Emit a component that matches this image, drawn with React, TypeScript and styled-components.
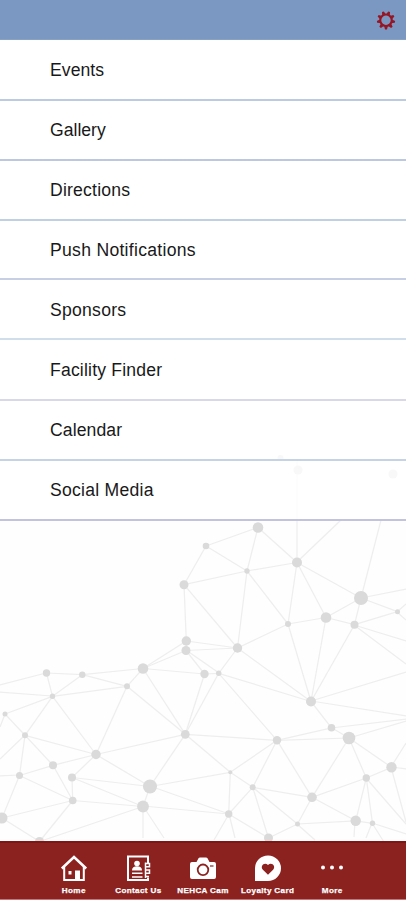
import React from 'react';
import styled, { createGlobalStyle } from 'styled-components';

const GlobalStyle = createGlobalStyle`
  *, *::before, *::after { box-sizing: border-box; }
  body { margin: 0; background: #fff; }
`;

const Screen = styled.main`
  position: relative;
  display: flex;
  flex-direction: column;
  height: 900px;
  overflow: hidden;
  background: #fefefe;
  font-family: 'Liberation Sans', Arial, sans-serif;
`;

const Backdrop = styled.svg`
  position: absolute;
  left: 0;
  top: 0;
`;

const Header = styled.header`
  position: relative;
  flex: none;
  display: flex;
  justify-content: flex-end;
  height: 40px;
  padding: 10px 9px 0 0;
  background: #7b98c3;
  border-bottom: 1px solid #87a2c3;
`;

const SettingsButton = styled.button`
  width: 22px;
  height: 22px;
  padding: 0;
  border: 0;
  background: none;
  svg { display: block; }
`;

const Menu = styled.nav`
  position: relative;
  flex: 1;
`;

const MenuItem = styled.a<{ $line: string; $height?: number; $top?: number; $spacing?: number }>`
  display: block;
  height: ${(p) => p.$height ?? 60}px;
  padding: ${(p) => p.$top ?? 19}px 0 0 50px;
  background: rgba(255, 255, 255, 0.8);
  border-bottom: 2px solid ${(p) => p.$line};
  color: #191919;
  font-size: 17.6px;
  line-height: 20px;
  letter-spacing: ${(p) => p.$spacing ?? 0.1}px;
`;

const TabBar = styled.footer`
  position: relative;
  flex: none;
  display: flex;
  justify-content: center;
  height: 59px;
  background: #8b2220;
  border-top: 2px solid #7d1715;
  border-bottom: 1px solid #c4777b;
`;

const Tab = styled.a`
  display: flex;
  flex-direction: column;
  align-items: center;
  width: 64.6px;
  padding-top: 11px;
  color: #fff;
`;

const TabLabel = styled.span`
  margin-top: 4px;
  font-size: 8.1px;
  font-weight: 700;
  line-height: 10px;
  letter-spacing: 0.35px;
  white-space: nowrap;
  -webkit-text-stroke: 0.25px #fff;
`;

type Dot = [number, number, number];

const dots: Record<string, Dot> = {
  a: [258, 527.5, 5.3], b: [206, 546, 3.3], c: [247, 571, 2.7], d: [297, 562.5, 5],
  e: [361, 598, 7], f: [397.5, 611.7, 2.5], g: [326, 617.5, 5.3], h: [354.5, 624.7, 4],
  i: [288, 624, 3], j: [237.5, 648, 4.7], k: [204.5, 674, 4.2], l: [218.7, 673.3, 2.7],
  m: [311, 701.5, 5], n: [184, 584.7, 4.5], o: [186.3, 641, 4.7], p: [186, 650.5, 4.5],
  q: [143, 668.5, 5.3], r: [127, 686.3, 3], s: [82.3, 674.7, 3.2], t: [46.5, 673, 3.7],
  u: [52.5, 696.3, 2.7], v: [5, 714, 2.5], w: [25, 735.3, 3], x: [185.3, 734.3, 4.4],
  y: [96, 754.5, 4.7], z: [53, 765.3, 4], A: [19.5, 775.5, 3.5], B: [72, 777.5, 4],
  C: [150, 786.5, 7], D: [143, 806.5, 5.9], E: [72.7, 800.5, 3.8], F: [2, 818, 5.5],
  G: [39.5, 841.5, 4.5], H: [277, 740.3, 4.2], I: [331.5, 727.8, 3.8], J: [349, 738, 6.3],
  K: [391.5, 767.3, 5.2], L: [366.3, 778, 3.7], M: [312, 797.3, 4.8], N: [230.3, 772.3, 2],
  O: [252.7, 787.3, 3], P: [228.7, 814, 3.7], Q: [268.5, 838, 4.5], R: [297.5, 824, 2.5],
  S: [355.7, 820.8, 5.2], T: [372.5, 823.3, 2.7],
};

const links =
  'ab ac ad bc bn cn cd ci cj di dg de eg eh ef fh gi gh gm hm ij im jm jn jo jp jl lm lx lH kx kp kl ' +
  'no op pq qo qk qr qs qx rx rs ru ry st su tu uw uy uv vw wy wz wA yz yB yx yC zA zE AE AF BC BD BE EF EG ED ' +
  'FG GD CD CN Cx xN xH HN HO HM HI HJ mI IJ JM JK JL KL LM LS LT MO MR MS NO NP OP OQ OR PQ QR RS ST';

const loose: [number, number, number, number][] = [
  [297, 562, 297, 460], [297, 562, 341, 520], [361, 598, 381, 520], [361, 598, 406, 589],
  [397, 612, 406, 604], [397, 612, 406, 620], [354, 625, 406, 641], [354, 625, 406, 664],
  [311, 701, 406, 672], [311, 701, 406, 716], [331, 728, 406, 719], [349, 738, 406, 721],
  [391, 767, 406, 743], [391, 767, 406, 769], [391, 767, 406, 822], [366, 778, 406, 824],
  [372, 823, 406, 834], [372, 823, 384, 842], [355, 821, 354, 837], [372, 823, 366, 838],
  [0, 685, 46, 673], [0, 692, 52, 696], [0, 727, 5, 714], [0, 759, 25, 735],
  [0, 776, 19, 775], [143, 806, 143, 838], [143, 806, 164, 838], [143, 806, 229, 814],
  [150, 786, 229, 814], [229, 814, 214, 840], [229, 814, 235, 838], [297, 824, 315, 840],
  [186, 650, 219, 673],
];

const Network = () => (
  <Backdrop width="406" height="842" viewBox="0 0 406 842" aria-hidden="true">
    <g stroke="#eeeeee" strokeWidth="1.25">
      {links.split(' ').map((pair) => {
        const [p, q] = [dots[pair[0]], dots[pair[1]]];
        return <line key={pair} x1={p[0]} y1={p[1]} x2={q[0]} y2={q[1]} />;
      })}
      {loose.map(([x1, y1, x2, y2], i) => (
        <line key={i} x1={x1} y1={y1} x2={x2} y2={y2} />
      ))}
    </g>
    <g fill="#dadada">
      {Object.entries(dots).map(([id, [x, y, r]]) => (
        <circle key={id} cx={x} cy={y} r={r} />
      ))}
      <circle cx="298" cy="470" r="4.5" />
      <circle cx="393" cy="474" r="4.5" />
      <circle cx="280.500" cy="458" r="3" />
    </g>
  </Backdrop>
);

const GearIcon = () => (
  <svg width="22" height="22" viewBox="0 0 22 22" fill="none" stroke="#951625">
    <circle cx="11" cy="10.300" r="5.700" strokeWidth="2" />
    <g fill="#951625" stroke="none">
      {[20, 60, 100, 140, 180, 220, 260, 300, 340].map((a) => (
        <path key={a} d="M9 5 10 1.200h2L13 5z" transform={`rotate(${a} 11 10.300)`} />
      ))}
    </g>
  </svg>
);

const HomeIcon = () => (
  <svg width="28" height="28" viewBox="0 0 28 28" fill="none" stroke="#fff" strokeWidth="2">
    <path d="M1.800 14.500 14 3l12.200 11.500" strokeWidth="2.500" />
    <path d="M4.200 13v13h19.600V13" />
    <path d="M15 16.500h5V26h-5zM8.500 17h3v3.500h-3z" fill="#fff" stroke="none" />
  </svg>
);

const ContactIcon = () => (
  <svg width="28" height="28" viewBox="0 0 28 28" fill="none" stroke="#fff" strokeWidth="2">
    <path d="M24 9V2.500H4V26h20v-2.500" />
    <path d="M21.500 8.500V24" strokeWidth="1.500" />
    <path d="M22 9.500h3.500v3.200H22M22 16h3.500v3.200H22M22 22.500h3" strokeWidth="1.500" />
    <circle cx="13" cy="9.500" r="2.800" fill="#fff" stroke="none" />
    <path d="M8 16.500c0-3 2-4.200 5-4.200s5 1.200 5 4.200z" fill="#fff" stroke="none" />
    <path d="M8 19.300h10.500M8 23h10.500" strokeWidth="1.500" />
  </svg>
);

const CameraIcon = () => (
  <svg width="28" height="28" viewBox="0 0 28 28">
    <path d="M3 8h4.500l2-3.700Q10 3.500 11 3.500h6q1 0 1.500.8l2 3.700H25q2 0 2 2v13q0 2-2 2H3q-2 0-2-2V10q0-2 2-2z" fill="#fff" />
    <circle cx="14" cy="15.800" r="5.300" fill="none" stroke="#8b2220" strokeWidth="1.800" />
    <path d="M21 12h3.500" stroke="#8b2220" strokeWidth="1.200" />
  </svg>
);

const LoyaltyIcon = () => (
  <svg width="28" height="28" viewBox="0 0 28 28">
    <path d="M1 27V14a13 12.800 0 1 1 13 13z" fill="#fff" />
    <path d="M14 20.800 8.900 15.700c-3.300-3.500 1.600-8.200 5.100-4.600 3.500-3.600 8.400 1.100 5.100 4.600z" fill="#8b2220" />
  </svg>
);

const MoreIcon = () => (
  <svg width="28" height="28" viewBox="0 0 28 28" fill="#fff">
    <circle cx="5" cy="13.500" r="2" />
    <circle cx="14" cy="13.500" r="2" />
    <circle cx="23" cy="13.500" r="2" />
  </svg>
);

const items = [
  { label: 'Events', line: '#bdcbe2', height: 61, top: 20, spacing: 0.05 },
  { label: 'Gallery', line: '#bdc8e0', spacing: 0 },
  { label: 'Directions', line: '#c1cfe3', spacing: 0.2 },
  { label: 'Push Notifications', line: '#c6cfe3', height: 59, spacing: 0.28 },
  { label: 'Sponsors', line: '#d0deeb', top: 20, spacing: 0.25 },
  { label: 'Facility Finder', line: '#d8d8e8', height: 61, top: 20, spacing: 0.18 },
  { label: 'Calendar', line: '#c6d3e5' },
  { label: 'Social Media', line: '#c2c4dd', spacing: 0.25 },
];

const tabs = [
  { label: 'Home', Icon: HomeIcon },
  { label: 'Contact Us', Icon: ContactIcon },
  { label: 'NEHCA Cam', Icon: CameraIcon },
  { label: 'Loyalty Card', Icon: LoyaltyIcon },
  { label: 'More', Icon: MoreIcon },
];

export default function App() {
  return (
    <Screen>
      <GlobalStyle />
      <Network />
      <Header>
        <SettingsButton aria-label="Settings">
          <GearIcon />
        </SettingsButton>
      </Header>
      <Menu>
        {items.map((item) => (
          <MenuItem
            key={item.label}
            $line={item.line}
            $height={item.height}
            $top={item.top}
            $spacing={item.spacing}
          >
            {item.label}
          </MenuItem>
        ))}
      </Menu>
      <TabBar>
        {tabs.map(({ label, Icon }) => (
          <Tab key={label}>
            <Icon />
            <TabLabel>{label}</TabLabel>
          </Tab>
        ))}
      </TabBar>
    </Screen>
  );
}
